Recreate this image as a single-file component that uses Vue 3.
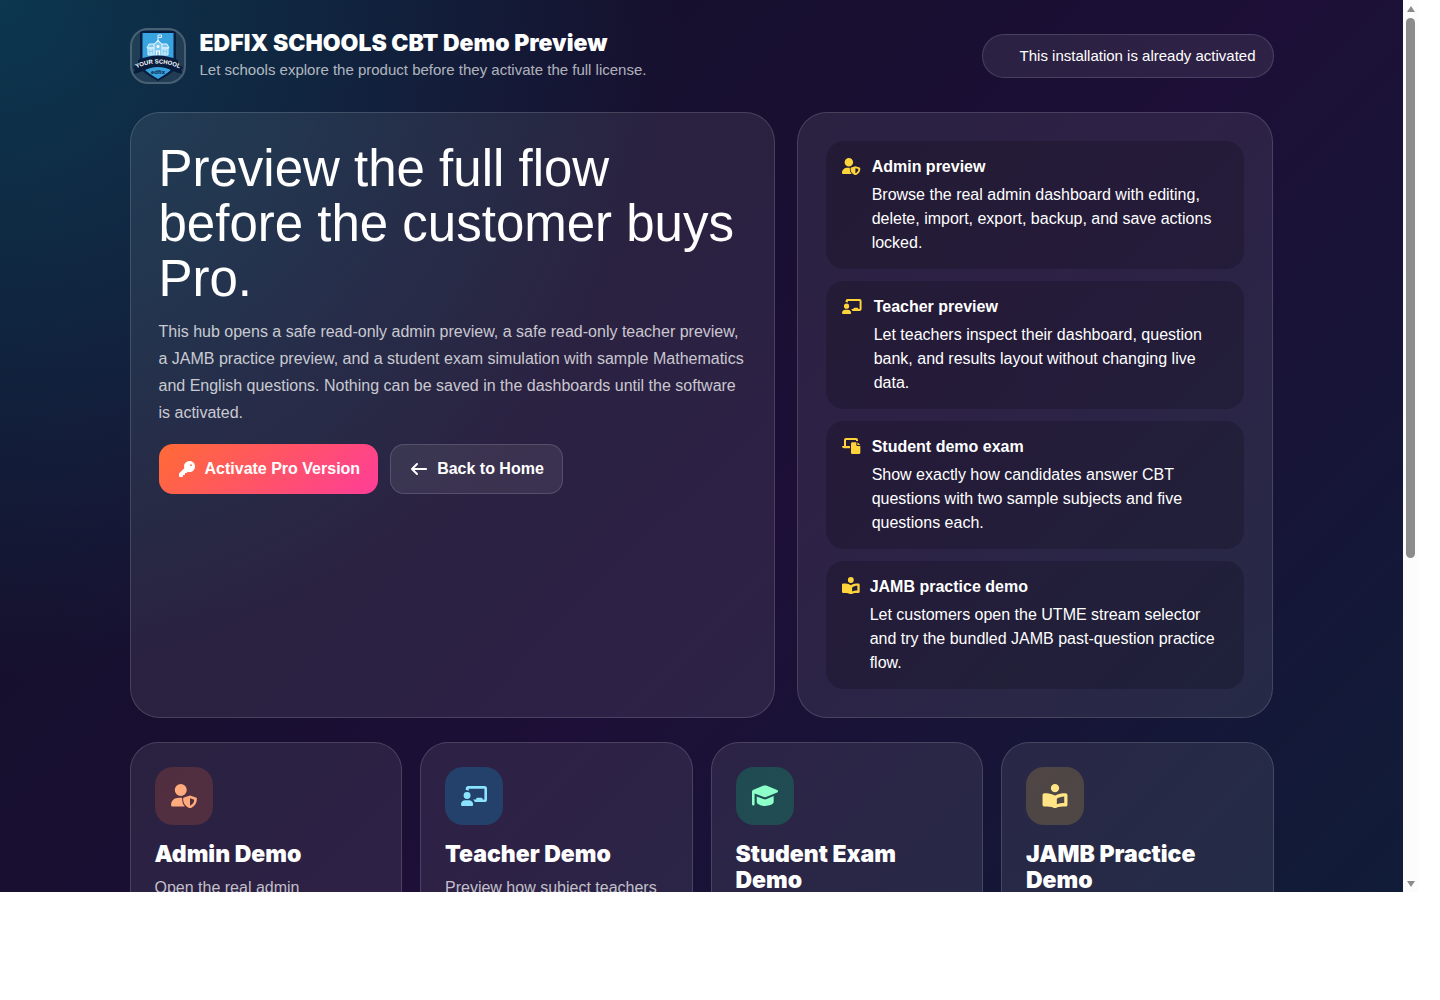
<template>
    <div class="window">
        <main class="page">
            <div class="container">
                <header class="topbar">
                    <div class="brand">
                        <svg class="logo" viewBox="2 2 52 52" role="img" aria-label="Your School">
                            <path d="M10 3h36v34c0 6-9 11-18 16-9-5-18-10-18-16z" fill="#081c3e" />
                            <path d="M12.500 5h31v31c0 6-8 10.500-15.500 15C20.500 46.500 12.500 42 12.500 36z" fill="#38a3de" />
                            <path d="M28 14V7h3.500v2.500H28.500" fill="none" stroke="#e5f5ff" stroke-width="1" />
                            <path d="M19 16h6l3-4 3 4h6l2 4H17zM18 20h20v7H18z" fill="#7cc9f1" stroke="#e5f5ff" stroke-width="1" />
                            <path d="M24 27V16l4-3 4 3v11" fill="#7cc9f1" stroke="#e5f5ff" stroke-width="1" />
                            <path d="M19.500 22h3M19.500 25h3M33.500 22h3M33.500 25h3M26.500 27v-4h3v4" fill="none" stroke="#fff" stroke-width="1.200" />
                            <circle cx="28" cy="18.500" r="1.500" fill="#fff" />
                            <path d="M3 39l5-2v-5Q28 23 48 32v5l5 2-2 3 2 4q-6-1-10-3-15-8-30 0-4 2-10 3l2-4z" fill="#081c3e" />
                            <path id="logo-arc" d="M3 42Q28 29 53 42" fill="none" />
                            <text class="logo-name">
                                <textPath href="#logo-arc" startOffset="50%" text-anchor="middle">YOUR SCHOOL</textPath>
                            </text>
                            <text class="logo-sub" x="28" y="46" text-anchor="middle">edfix</text>
                        </svg>
                        <div>
                            <div class="brand-title">EDFIX SCHOOLS CBT Demo Preview</div>
                            <div class="brand-sub">Let schools explore the product before they activate the full license.</div>
                        </div>
                    </div>
                    <div class="status">This installation is already activated</div>
                </header>

                <section class="hero">
                    <div class="panel">
                        <h1>Preview the full flow before the customer buys Pro.</h1>
                        <p class="lead">
                            This hub opens a safe read-only admin preview, a safe read-only teacher preview, a JAMB
                            practice preview, and a student exam simulation with sample Mathematics and English
                            questions. Nothing can be saved in the dashboards until the software is activated.
                        </p>
                        <div class="actions">
                            <a href="#activate" class="btn btn-primary">
                                <svg viewBox="0 0 512 512" class="btn-icon" aria-hidden="true"><path :d="icons.key.path" /></svg>
                                Activate Pro Version
                            </a>
                            <a href="#home" class="btn btn-ghost">
                                <svg viewBox="0 0 512 512" class="btn-icon" aria-hidden="true"><path :d="icons.arrow.path" /></svg>
                                Back to Home
                            </a>
                        </div>
                    </div>

                    <div class="panel features">
                        <article v-for="item in features" :key="item.title" class="feature">
                            <svg
                                :viewBox="icons[item.icon].box"
                                :class="['feature-icon', item.icon]"
                                preserveAspectRatio="xMinYMid meet"
                                aria-hidden="true"
                            >
                                <path :d="icons[item.icon].path" fill-rule="evenodd" />
                            </svg>
                            <div>
                                <h2>{{ item.title }}</h2>
                                <p>{{ item.text }}</p>
                            </div>
                        </article>
                    </div>
                </section>

                <section class="demos">
                    <article v-for="demo in demos" :key="demo.title" class="demo">
                        <div :class="['demo-icon', demo.tone]">
                            <svg :viewBox="icons[demo.icon].box" aria-hidden="true">
                                <path :d="icons[demo.icon].path" fill-rule="evenodd" />
                            </svg>
                        </div>
                        <h3>{{ demo.title }}</h3>
                        <p v-if="demo.text">{{ demo.text }}</p>
                    </article>
                </section>
            </div>
        </main>

        <div class="scrollbar" aria-hidden="true">
            <svg viewBox="0 0 10 8"><path d="M5 1l4 6H1z" /></svg>
            <div class="track"><div class="thumb"></div></div>
            <svg viewBox="0 0 10 8"><path d="M5 7l4-6H1z" /></svg>
        </div>
    </div>
</template>


<script setup>
const icons = {
    key: {
        path: 'M340 0c95 0 172 77 172 172s-77 180-172 180c-20 0-38-3-55-8l-35 34q-6 6-15 6h-43v40q0 24-24 24h-40v40q0 24-24 24H24q-24 0-24-24v-82q0-10 7-17l163-161c-5-18-8-36-8-56C162 77 245 0 340 0zM384 104a28 28 0 1 0 0 56 28 28 0 1 0 0-56z'
    },
    arrow: {
        path: 'M9.400 233.400c-12.500 12.500-12.500 32.800 0 45.300l160 160c12.500 12.500 32.800 12.500 45.300 0s12.500-32.800 0-45.300L109.200 288 480 288c17.700 0 32-14.300 32-32s-14.300-32-32-32l-370.700 0 105.400-105.400c12.500-12.500 12.500-32.800 0-45.300s-32.800-12.500-45.300 0l-160 160z'
    },
    shield: {
        box: '0 0 56 52',
        path: 'M21 0a13 13 0 1 1 0 26a13 13 0 1 1 0-26zM17 30h6q1 0 1 2c0 7 2 13 6 17H3q-3 0-3-3C0 36 7 30 17 30zM41 25l13 4q2 1 2 3c0 10-5 17-15 21c-10-4-15-11-15-21q0-2 2-3zM41 31v16c6-3 9-7 9-13z'
    },
    teacher: {
        box: '0 0 60 46',
        path: 'M17 0h37q6 0 6 6v25q0 6-6 6H32c-1-2-2-4-4-6h7v-1q0-3 3-3h9q3 0 3 3v1h4V6H18v5q-3-2-7-2V6q0-6 6-6zM14 14a8 8 0 1 1 0 16a8 8 0 1 1 0-16zM10 33h8c6 0 10 4 10 10q0 3-3 3H3q-3 0-3-3c0-6 4-10 10-10z'
    },
    laptop: {
        box: '0 0 56 48',
        path: 'M12 0h30q6 0 6 6v3h-6V6H12v18h12v7H6q-6 0-6-6q0-1 1-1h5V6q0-6 6-6zM31 13h12v8q0 3 3 3h9v20q0 4-4 4H31q-4 0-4-4V17q0-4 4-4zM46 13l9 8h-9z'
    },
    reader: {
        box: '0 0 54 52',
        path: 'M27 0a9 9 0 1 1 0 18a9 9 0 1 1 0-18zM4 20c9 0 16 1 23 5c7-4 14-5 23-5q4 0 4 4v21q0 4-4 4c-9 0-14 0-21 3h-4c-7-3-12-3-21-3q-4 0-4-4V24q0-4 4-4zM31 32v12c5-2 9-3 16-3V27c-6 0-12 2-16 5z'
    },
    cap: {
        box: '0 0 60 50',
        path: 'M27 1q3-1 6 0l25 10q2 1 2 3t-2 3L34 27q-4 2-8 0L6 19v25q0 3-3 3t-3-3V15q0-3 2-4zM11 26l15 6q4 2 8 0l16-7v14c0 5-10 9-20 9s-19-4-19-9z'
    }
};

const features = [
    {
        icon: 'shield',
        title: 'Admin preview',
        text: 'Browse the real admin dashboard with editing, delete, import, export, backup, and save actions locked.'
    },
    {
        icon: 'teacher',
        title: 'Teacher preview',
        text: 'Let teachers inspect their dashboard, question bank, and results layout without changing live data.'
    },
    {
        icon: 'laptop',
        title: 'Student demo exam',
        text: 'Show exactly how candidates answer CBT questions with two sample subjects and five questions each.'
    },
    {
        icon: 'reader',
        title: 'JAMB practice demo',
        text: 'Let customers open the UTME stream selector and try the bundled JAMB past-question practice flow.'
    }
];

const demos = [
    { icon: 'shield', tone: 'orange', title: 'Admin Demo', text: 'Open the real admin' },
    { icon: 'teacher', tone: 'blue', title: 'Teacher Demo', text: 'Preview how subject teachers' },
    { icon: 'cap', tone: 'green', title: 'Student Exam Demo' },
    { icon: 'reader', tone: 'yellow', title: 'JAMB Practice Demo' }
];
</script>


<style>
body {
    margin: 0;
    background: #fff;
}
</style>

<style scoped>
* {
    box-sizing: border-box;
}

h1,
h2,
h3,
p {
    margin: 0;
}

.window {
    display: flex;
    height: 100vh;
    padding: 0 22px 108px 0;
    font-family: "Liberation Sans", Arial, sans-serif;
    font-size: 16px;
    line-height: 24px;
    color: #fff;
}

.page {
    flex: 1;
    min-width: 0;
    overflow: hidden;
    background-image:
        radial-gradient(circle at top left, rgba(0, 212, 255, 0.2), transparent 37%),
        linear-gradient(135deg, #0e1023 0%, #1d0f37 50%, #0c2038 100%);
    background-size: 100% 1200px;
}

.container {
    max-width: 1144px;
    margin: 0 auto;
    padding: 28px 0;
}

.topbar {
    display: flex;
    align-items: center;
    justify-content: space-between;
    margin-bottom: 28px;
}

.brand {
    display: flex;
    align-items: center;
    gap: 14px;
}

.logo {
    width: 56px;
    height: 56px;
    border: 2px solid rgba(255, 255, 255, 0.18);
    border-radius: 18px;
    background: rgba(255, 255, 255, 0.08);
}

.logo-name {
    font-size: 6px;
    font-weight: 700;
    fill: #fff;
}

.logo-sub {
    font-size: 6px;
    font-weight: 700;
    fill: #081c3e;
}

.brand-title {
    font-family: Inter, "Liberation Sans", sans-serif;
    font-size: 23px;
    font-weight: 900;
    line-height: 28px;
}

.brand-sub {
    font-size: 15px;
    line-height: 26px;
    color: rgba(255, 255, 255, 0.68);
}

.status {
    padding: 9px 17px 9px 37px;
    border: 1px solid rgba(255, 255, 255, 0.14);
    border-radius: 22px;
    background: rgba(255, 255, 255, 0.08);
    font-size: 15px;
}

.hero {
    display: grid;
    grid-template-columns: 23fr 17fr;
    gap: 22px;
    margin-bottom: 24px;
}

.panel {
    padding: 28px;
    border: 1px solid rgba(255, 255, 255, 0.14);
    border-radius: 30px;
    background: rgba(255, 255, 255, 0.08);
}

h1 {
    margin-bottom: 12px;
    font-size: 51px;
    font-weight: 400;
    line-height: 55px;
}

.lead {
    line-height: 27px;
    color: rgba(255, 255, 255, 0.76);
}

.actions {
    display: flex;
    gap: 12px;
    margin-top: 18px;
}

.btn {
    display: inline-flex;
    align-items: center;
    gap: 8px;
    height: 50px;
    padding: 0 18px;
    border-radius: 14px;
    font-weight: 700;
    color: #fff;
    text-decoration: none;
}

.btn-primary {
    background: linear-gradient(135deg, #ff6b35, #ff3d98);
}

.btn-ghost {
    border: 1px solid rgba(255, 255, 255, 0.14);
    background: rgba(255, 255, 255, 0.08);
}

.btn-icon {
    width: 20px;
    height: 16px;
    fill: currentColor;
}

.features {
    display: grid;
    gap: 12px;
}

.feature {
    display: flex;
    gap: 10px;
    padding: 14px 16px;
    border-radius: 18px;
    background: rgba(0, 0, 0, 0.18);
}

.feature-icon {
    flex: none;
    width: 20px;
    height: 17px;
    margin-top: 3px;
    fill: #ffd43b;
}

.feature-icon.teacher {
    width: 22px;
    height: 15px;
    margin-top: 4px;
}

.feature-icon.laptop {
    height: 16px;
}

.feature-icon.reader {
    width: 18px;
    margin-top: 2px;
}

.feature h2 {
    margin-bottom: 4px;
    font-size: 16px;
    line-height: 24px;
}

.demos {
    display: grid;
    grid-template-columns: repeat(4, 1fr);
    gap: 18px;
}

.demo {
    min-height: 320px;
    padding: 24px;
    border: 1px solid rgba(255, 255, 255, 0.14);
    border-radius: 28px;
    background: rgba(255, 255, 255, 0.08);
}

.demo-icon {
    display: flex;
    align-items: center;
    justify-content: center;
    width: 58px;
    height: 58px;
    margin-bottom: 16px;
    border-radius: 18px;
}

.demo-icon svg {
    width: 26px;
    height: 24px;
    fill: currentColor;
}

.demo-icon.orange {
    background: rgba(255, 107, 53, 0.18);
    color: #ffab7d;
}

.demo-icon.blue {
    background: rgba(0, 180, 240, 0.22);
    color: #8be4ff;
}

.demo-icon.green {
    background: rgba(0, 200, 120, 0.24);
    color: #8dffc8;
}

.demo-icon.yellow {
    background: rgba(255, 212, 59, 0.18);
    color: #ffe586;
}

.demo h3 {
    margin-bottom: 8px;
    font-family: Inter, "Liberation Sans", sans-serif;
    font-size: 23px;
    font-weight: 900;
    line-height: 26px;
}

.demo p {
    line-height: 26px;
    color: rgba(255, 255, 255, 0.72);
}

.scrollbar {
    display: flex;
    flex-direction: column;
    align-items: center;
    gap: 5px;
    width: 15px;
    padding: 5px 0 4px;
    background: #fcfcfc;
}

.scrollbar svg {
    width: 10px;
    height: 8px;
    fill: #8b8b8b;
}

.track {
    flex: 1;
    width: 9px;
}

.thumb {
    height: 63%;
    border-radius: 5px;
    background: #8b8b8b;
}
</style>
